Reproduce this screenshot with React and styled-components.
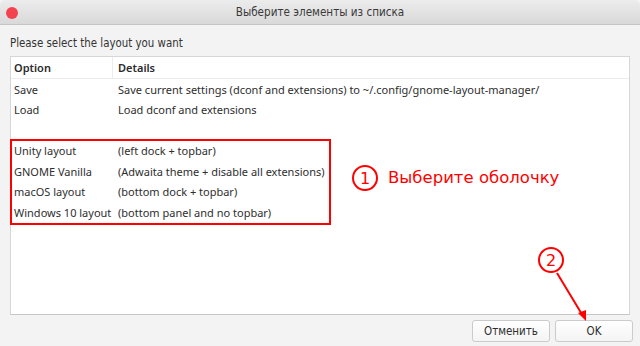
import React from 'react';
import styled, { createGlobalStyle } from 'styled-components';

const GlobalStyle = createGlobalStyle`
  html, body {
    margin: 0;
    padding: 0;
    background: #f3f3f3;
  }
  body {
    font-family: "Noto Sans", "DejaVu Sans", sans-serif;
    font-size: 11px;
    color: #2e2e2e;
  }
`;

const Window = styled.div`
  position: relative;
  width: 640px;
  height: 346px;
  display: flex;
  flex-direction: column;
  background: #f3f3f3;
  overflow: hidden;
`;

const TitleBar = styled.div`
  position: relative;
  height: 25px;
  flex: none;
  display: flex;
  align-items: center;
  justify-content: center;
  background: linear-gradient(#ececec, #d9d9d9);
  border-bottom: 1px solid #c4c4c4;
  box-sizing: border-box;
  border-radius: 6px 6px 0 0;
`;

const CloseDot = styled.span`
  position: absolute;
  left: 6px;
  top: 7px;
  width: 12px;
  height: 12px;
  border-radius: 50%;
  background: #f2434f;
`;

const Title = styled.div`
  font-family: "DejaVu Sans Condensed", "DejaVu Sans", sans-serif;
  font-size: 11.6px;
  line-height: 16px;
  color: #3a3a3a;
  white-space: nowrap;
`;

const Body = styled.div`
  flex: 1;
  display: flex;
  flex-direction: column;
  padding: 10px 10px 0 10px;
`;

const Prompt = styled.div`
  font-family: "DejaVu Sans Condensed", "DejaVu Sans", sans-serif;
  font-size: 11.4px;
  line-height: 16px;
  color: #333;
  margin-bottom: 5px;
`;

const Tree = styled.div`
  position: relative;
  height: 259px;
  background: #fff;
  border: 1px solid #d6d6d6;
  border-bottom-color: #c6c6c6;
  box-sizing: border-box;
  display: flex;
  flex-direction: column;
`;

const HeaderRow = styled.div`
  display: grid;
  grid-template-columns: 102px 1fr;
  height: 21px;
  border-bottom: 1px solid #ececec;
`;

const HeaderCell = styled.div`
  display: flex;
  align-items: center;
  padding-left: ${p => (p.$first ? 3 : 5)}px;
  font-weight: 600;
  font-size: 11px;
  color: #2a2a2a;
  border-right: ${p => (p.$first ? '1px solid #ececec' : 'none')};
`;

const Row = styled.div`
  display: grid;
  grid-template-columns: 102px 1fr;
  height: 20.5px;
  align-items: center;
`;

const Cell = styled.div`
  padding-left: ${p => (p.$first ? 3 : 5)}px;
  white-space: nowrap;
  font-size: 11px;
  color: #2e2e2e;
`;

const Buttons = styled.div`
  display: flex;
  justify-content: flex-end;
  gap: 5px;
  padding-top: 5px;
  margin-right: -3px;
`;

const Button = styled.button`
  width: 78px;
  height: 22px;
  box-sizing: border-box;
  border: 1px solid #cbcbcb;
  border-radius: 3px;
  background: linear-gradient(#ffffff, #f4f4f4);
  font-family: "DejaVu Sans Condensed", "DejaVu Sans", sans-serif;
  font-size: 11.5px;
  color: #2e2e2e;
  padding: 0;
`;

const Highlight = styled.div`
  position: absolute;
  left: -1px;
  top: 82px;
  width: 321px;
  height: 86px;
  border: 2px solid #f00;
  box-sizing: border-box;
`;

const Badge = styled.div`
  position: absolute;
  left: ${p => p.$x}px;
  top: ${p => p.$y}px;
  width: 26px;
  height: 26px;
  box-sizing: border-box;
  border: 2px solid #f00;
  border-radius: 50%;
  display: flex;
  align-items: center;
  justify-content: center;
  font-family: "DejaVu Sans", sans-serif;
  font-size: 16px;
  color: #f00;
  background: ${p => (p.$filled ? '#fff' : 'transparent')};
`;

const Note = styled.div`
  position: absolute;
  left: 388px;
  top: 168px;
  font-family: "DejaVu Sans", sans-serif;
  font-size: 16.5px;
  color: #f00;
`;

const Arrow = styled.svg`
  position: absolute;
  left: 0;
  top: 0;
  pointer-events: none;
`;

const rows = [
  ['Save', 'Save current settings (dconf and extensions) to ~/.config/gnome-layout-manager/'],
  ['Load', 'Load dconf and extensions'],
  ['', ''],
  ['Unity layout', '(left dock + topbar)'],
  ['GNOME Vanilla', '(Adwaita theme + disable all extensions)'],
  ['macOS layout', '(bottom dock + topbar)'],
  ['Windows 10 layout', '(bottom panel and no topbar)'],
];

export default function App() {
  return (
    <>
      <GlobalStyle />
      <Window>
        <TitleBar>
          <CloseDot />
          <Title>Выберите элементы из списка</Title>
        </TitleBar>
        <Body>
          <Prompt>Please select the layout you want</Prompt>
          <Tree>
            <HeaderRow>
              <HeaderCell $first>Option</HeaderCell>
              <HeaderCell>Details</HeaderCell>
            </HeaderRow>
            {rows.map((r, i) => (
              <Row key={i}>
                <Cell $first>{r[0]}</Cell>
                <Cell>{r[1]}</Cell>
              </Row>
            ))}
            <Highlight />
          </Tree>
          <Buttons>
            <Button>Отменить</Button>
            <Button>OK</Button>
          </Buttons>
        </Body>
        <Badge $x={352} $y={165}>1</Badge>
        <Note>Выберите оболочку</Note>
        <Arrow width="640" height="346" viewBox="0 0 640 346">
          <line x1="557" y1="273" x2="583" y2="316" stroke="#f00" strokeWidth="2" />
          <path d="M586 321 L578 313 L586 310 Z" fill="#f00" />
        </Arrow>
        <Badge $x={538} $y={247} $filled>2</Badge>
      </Window>
    </>
  );
}
